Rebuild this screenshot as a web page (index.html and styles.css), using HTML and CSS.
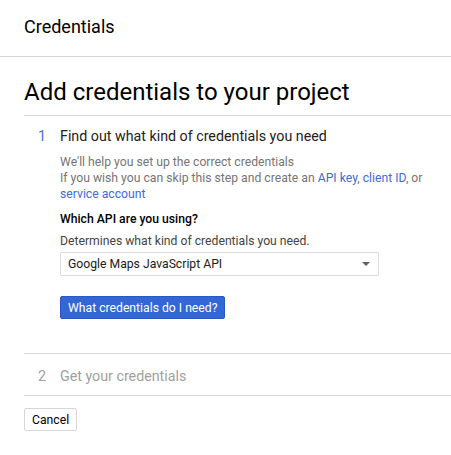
FILE: index.html
```html
<!DOCTYPE html>
<html>
<head>
<meta charset="utf-8">
<link rel="stylesheet" href="styles.css">
</head>
<body>
<header class="topbar"><span class="topbar-title">Credentials</span></header>
<main class="content">
  <h1 class="page-title">Add credentials to your project</h1>
  <section class="step step-active">
    <div class="step-head"><span class="step-num">1</span><span class="step-title">Find out what kind of credentials you need</span></div>
    <div class="step-body">
      <p class="desc">We'll help you set up the correct credentials<br>If you wish you can skip this step and create an <a class="link">API key</a>, <a class="link">client ID</a>, or <a class="link">service account</a></p>
      <div class="field-label">Which API are you using?</div>
      <div class="field-hint">Determines what kind of credentials you need.</div>
      <div class="select"><span>Google Maps JavaScript API</span><span class="caret"></span></div>
      <button class="btn-primary">What credentials do I need?</button>
    </div>
  </section>
  <section class="step step-disabled">
    <div class="step-head"><span class="step-num">2</span><span class="step-title">Get your credentials</span></div>
  </section>
  <button class="btn-secondary">Cancel</button>
</main>
</body>
</html>
```
FILE: styles.css
```css
html, body { margin: 0; padding: 0; background: #fff; }
body { font-family: Roboto, "Liberation Sans", Arial, sans-serif; color: #212121; }
.topbar { height: 56px; border-bottom: 1px solid #d6d6d6; display: flex; align-items: center; padding-left: 24px; }
.topbar-title { font-size: 18px; color: #000; position: relative; top: -2px; }
.content { padding-left: 24px; }
.page-title { margin: 0; font-weight: 400; font-size: 24px; color: #000; height: 58px; line-height: 70px; border-bottom: 1px solid #d6d6d6; }
.step { border-bottom: 1px solid #d6d6d6; }
.step-head { display: flex; align-items: baseline; height: 38px; line-height: 40px; }
.step-num { width: 36px; text-align: center; font-size: 14.25px; color: #4a72d9; }
.step-title { font-size: 14.25px; color: #212121; }
.step-disabled .step-head { height: 41px; line-height: 44px; }
.step-disabled .step-num, .step-disabled .step-title { color: #a0a0a0; }
.step-body { padding-left: 36px; padding-bottom: 34px; }
.desc { margin: 0; font-size: 12.2px; line-height: 16px; color: #757575; }
.link { color: #3f6ad8; text-decoration: none; }
.field-label { margin-top: 9px; font-size: 12.2px; font-weight: 500; line-height: 16px; color: #000; }
.field-hint { margin-top: 6px; font-size: 12.2px; line-height: 16px; color: #444; }
.select { margin-top: 3px; width: 319px; box-sizing: border-box; height: 24px; border: 1px solid #dcdcdc; border-radius: 2px; display: flex; align-items: center; justify-content: space-between; padding: 0 8px 0 7px; font-size: 12.2px; color: #212121; }
.caret { width: 0; height: 0; border-left: 4px solid transparent; border-right: 4px solid transparent; border-top: 4px solid #616161; }
.btn-primary { display: block; margin-top: 20px; height: 23px; padding: 0 7px; background: #3367d6; border: 1px solid #2a56c6; border-radius: 2px; color: #fff; font-family: inherit; font-size: 12.2px; }
.btn-secondary { margin-top: 12px; height: 23px; padding: 0 7px; background: #fff; border: 1px solid #d6d6d6; border-radius: 2px; color: #000; font-family: inherit; font-size: 12.2px; }
```
